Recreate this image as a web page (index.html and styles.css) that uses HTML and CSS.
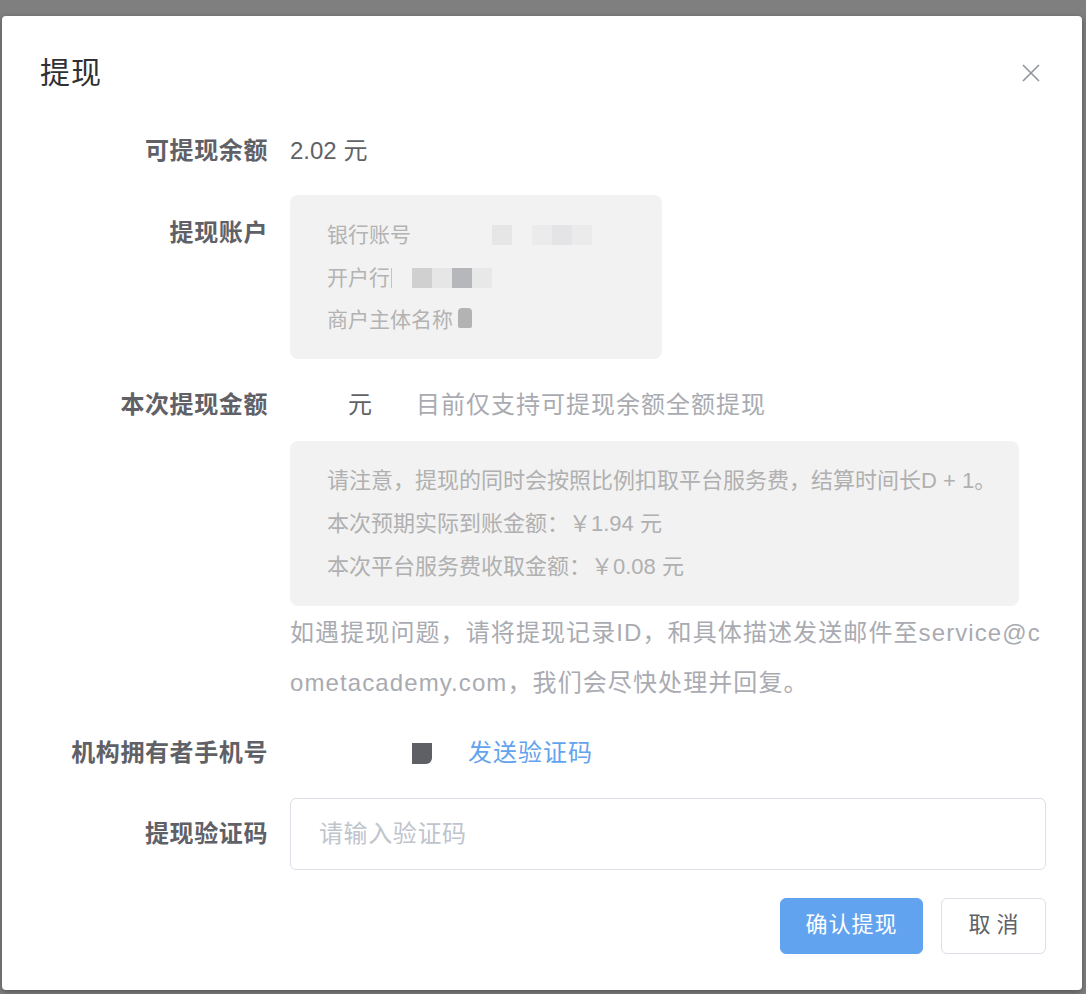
FILE: index.html
```html
<!DOCTYPE html>
<html lang="zh-CN">
<head>
<meta charset="utf-8">
<title>提现</title>
<link rel="stylesheet" href="styles.css">
</head>
<body>
<div class="dialog">
  <div class="dlg-header">
    <span class="dlg-title">提现</span>
    <button class="dlg-close" aria-label="关闭">
      <svg width="18" height="18" viewBox="0 0 18 18"><path d="M1 1L17 17M17 1L1 17" stroke="#909399" stroke-width="1.6" fill="none"/></svg>
    </button>
  </div>
  <div class="dlg-body">
    <div class="form-item">
      <div class="form-label">可提现余额</div>
      <div class="form-content">2.02 元</div>
    </div>

    <div class="form-item item-account">
      <div class="form-label label-offset">提现账户</div>
      <div class="form-content">
        <div class="account-box">
          <div class="acc-line">银行账号<span class="blur b1"></span><span class="blur b2"></span><span class="blur b3"></span><span class="blur b4"></span></div>
          <div class="acc-line">开户行<span class="tick"></span><span class="blur c1"></span><span class="blur c2"></span><span class="blur c3"></span><span class="blur c4"></span></div>
          <div class="acc-line">商户主体名称<span class="blur d1"></span></div>
        </div>
      </div>
    </div>

    <div class="form-item item-amount">
      <div class="form-label">本次提现金额</div>
      <div class="form-content amount-row">
        <span class="amount-unit">元</span>
        <span class="amount-hint">目前仅支持可提现余额全额提现</span>
      </div>
    </div>

    <div class="form-item item-notice">
      <div class="form-label"></div>
      <div class="form-content">
        <div class="notice-box">
          <div class="notice-line">请注意，提现的同时会按照比例扣取平台服务费，结算时间长D + 1。</div>
          <div class="notice-line">本次预期实际到账金额：￥1.94 元</div>
          <div class="notice-line">本次平台服务费收取金额：￥0.08 元</div>
        </div>
        <p class="help-text">如遇提现问题，请将提现记录ID，和具体描述发送邮件至service@cometacademy.com，我们会尽快处理并回复。</p>
      </div>
    </div>

    <div class="form-item item-phone">
      <div class="form-label">机构拥有者手机号</div>
      <div class="form-content phone-row">
        <span class="phone-mask"></span>
        <a class="send-code">发送验证码</a>
      </div>
    </div>

    <div class="form-item item-code">
      <div class="form-label label-code">提现验证码</div>
      <div class="form-content">
        <input class="code-input" type="text" placeholder="请输入验证码">
      </div>
    </div>
  </div>
  <div class="dlg-footer">
    <button class="btn btn-primary">确认提现</button>
    <button class="btn btn-default">取 消</button>
  </div>
</div>
</body>
</html>
```
FILE: styles.css
```css
* { box-sizing: border-box; }
html, body { margin: 0; padding: 0; }
body {
  background: #7f7f7f;
  font-family: "Liberation Sans", "Noto Sans CJK SC", sans-serif;
  width: 1086px;
  height: 994px;
  overflow: hidden;
  padding: 16px 0 0 2px;
}
.dialog {
  width: 1080px;
  height: 974px;
  background: #fff;
  border-radius: 4px;
  box-shadow: 0 2px 6px rgba(0,0,0,0.35);
  display: flex;
  flex-direction: column;
}
.dlg-header {
  display: flex;
  align-items: center;
  justify-content: space-between;
  padding: 37px 42px 0 38px;
  height: 77px;
}
.dlg-title {
  font-size: 30px;
  line-height: 40px;
  color: #303133;
  letter-spacing: 1px;
}
.dlg-close {
  border: 0;
  background: transparent;
  padding: 0;
  width: 18px;
  height: 18px;
  display: flex;
}
.dlg-body {
  padding: 38px 36px 0 0;
  flex: 1;
}
.form-item {
  display: grid;
  grid-template-columns: 266px 756px;
  column-gap: 22px;
}
.form-label {
  text-align: right;
  font-size: 24px;
  line-height: 40px;
  font-weight: 700;
  color: #5f6167;
  letter-spacing: 0.6px;
  white-space: nowrap;
}
.form-content {
  font-size: 24px;
  line-height: 40px;
  color: #606266;
}
.label-offset { padding-top: 18px; }
.item-account { margin-top: 24px; }
.account-box {
  width: 372px;
  height: 164px;
  background: #f2f2f2;
  border-radius: 8px;
  padding: 19px 0 0 37px;
}
.acc-line {
  font-size: 21px;
  line-height: 42px;
  color: #b3b3b3;
  position: relative;
  height: 42.5px;
}
.blur { position: absolute; top: 11px; height: 20px; }
.b1 { left: 165px; width: 20px; background: #e6e6e6; }
.b2 { left: 205px; width: 20px; background: #ebebeb; }
.b3 { left: 225px; width: 20px; background: #e4e4e6; }
.b4 { left: 245px; width: 20px; background: #ebebeb; }
.tick { position: absolute; left: 64px; top: 11px; width: 1px; height: 20px; background: #c4c4c4; }
.c1 { left: 85px; width: 20px; background: #d0d0d0; }
.c2 { left: 105px; width: 20px; background: #e6e6e6; }
.c3 { left: 125px; width: 20px; background: #b6b7bb; }
.c4 { left: 145px; width: 20px; background: #e8e8e8; }
.d1 { left: 131px; top: 9px; width: 14px; height: 20px; background: #b3b3b3; border-radius: 4px 4px 2px 2px; }

.item-amount { margin-top: 26px; }
.amount-row { display: flex; }
.amount-unit { margin-left: 58px; }
.amount-hint { margin-left: 44px; color: #a9abb1; letter-spacing: 1px; }

.item-notice { margin-top: 16px; }
.notice-box {
  background: #f2f2f2;
  border-radius: 8px;
  width: 729px;
  height: 165px;
  padding: 18px 0 0 37px;
}
.notice-line {
  font-size: 22px;
  line-height: 43px;
  color: #b0b0b0;
  white-space: nowrap;
}
.help-text {
  margin: 2px 0 0;
  font-size: 24px;
  line-height: 50px;
  color: #a9abb1;
  word-break: break-all;
  letter-spacing: 1.1px;
}

.item-phone { margin-top: 25px; }
.phone-row { display: flex; align-items: center; }
.phone-mask {
  margin-left: 122px;
  width: 20px;
  height: 21px;
  background: #5f6066;
  border-radius: 0 0 6px 0;
}
.send-code {
  margin-left: 36px;
  color: #63a3ee;
  letter-spacing: 1px;
  cursor: pointer;
}

.item-code { margin-top: 25px; }
.label-code { line-height: 72px; }
.code-input {
  width: 756px;
  height: 72px;
  border: 1px solid #dcdfe6;
  border-radius: 6px;
  padding: 0 28px;
  font-family: inherit;
  font-size: 24px;
  color: #606266;
  outline: none;
  letter-spacing: 0.6px;
}
.code-input::placeholder { color: #c0c4cc; }

.dlg-footer {
  display: flex;
  justify-content: flex-end;
  gap: 18px;
  padding: 0 36px 36px 0;
}
.btn {
  height: 56px;
  border-radius: 6px;
  font-family: inherit;
  font-size: 22px;
  line-height: 30px;
  padding: 0 0 2px;
  cursor: pointer;
}
.btn-primary {
  width: 143px;
  background: #62a3f0;
  border: 1px solid #62a3f0;
  color: #fff;
  letter-spacing: 1px;
}
.btn-default {
  width: 105px;
  background: #fff;
  border: 1px solid #dcdfe6;
  color: #606266;
}
```
